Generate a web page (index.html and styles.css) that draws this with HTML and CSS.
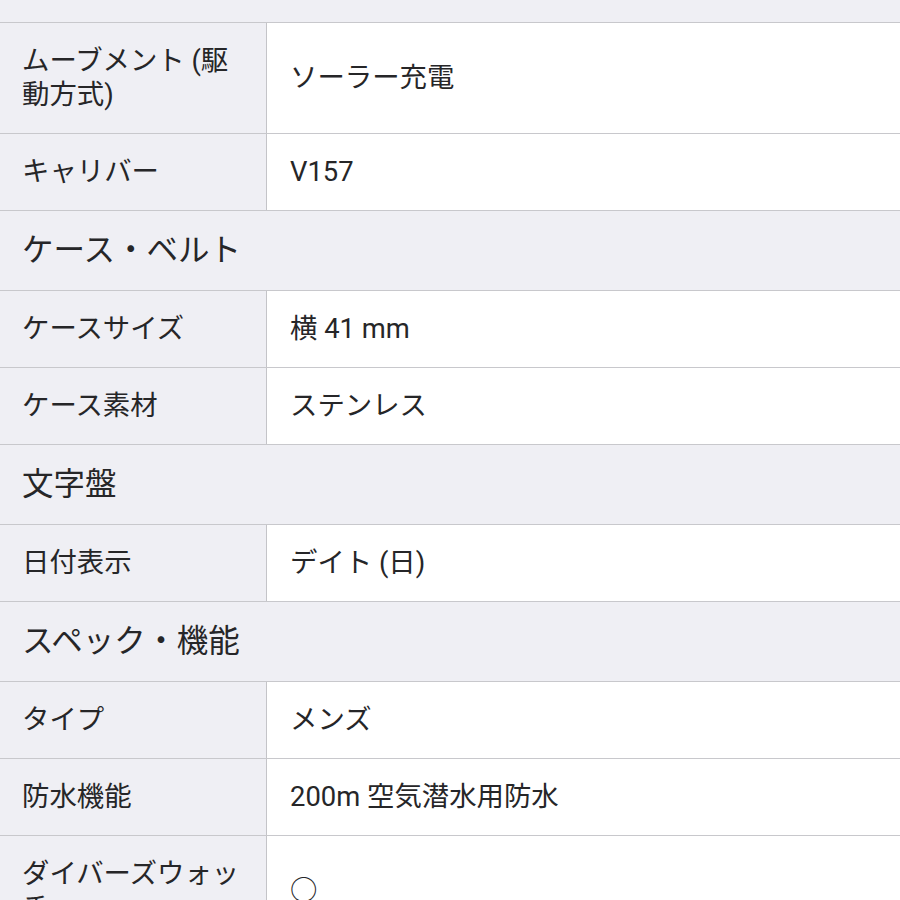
FILE: index.html
```html
<!DOCTYPE html>
<html lang="ja">
<head>
<meta charset="utf-8">
<link rel="stylesheet" href="styles.css">
</head>
<body>
<div class="spec">
  <div class="top-gap"></div>
  <div class="row"><div class="label">ムーブメント (駆動方式)</div><div class="value">ソーラー充電</div></div>
  <div class="row"><div class="label">キャリバー</div><div class="value">V157</div></div>
  <div class="section">ケース・ベルト</div>
  <div class="row"><div class="label">ケースサイズ</div><div class="value">横 41 mm</div></div>
  <div class="row"><div class="label">ケース素材</div><div class="value">ステンレス</div></div>
  <div class="section">文字盤</div>
  <div class="row"><div class="label">日付表示</div><div class="value">デイト (日)</div></div>
  <div class="section">スペック・機能</div>
  <div class="row"><div class="label">タイプ</div><div class="value">メンズ</div></div>
  <div class="row"><div class="label">防水機能</div><div class="value">200m 空気潜水用防水</div></div>
  <div class="row"><div class="label">ダイバーズウォッチ</div><div class="value">○</div></div>
</div>
</body>
</html>
```

FILE: styles.css
```css
html, body {
  margin: 0;
  padding: 0;
  background: #efeff4;
}
body {
  font-family: "Roboto", "Noto Sans CJK JP", sans-serif;
  color: #262628;
  height: 900px;
  overflow: hidden;
}
.spec {
  display: flex;
  flex-direction: column;
}
.top-gap {
  height: 22px;
}
.row {
  display: grid;
  grid-template-columns: 267px 1fr;
  border-top: 1px solid #c8c8cc;
  font-size: 27.4px;
  line-height: 34px;
}
.label {
  background: #efeff4;
  border-right: 1px solid #c4c4c8;
  padding: 21px 22px 21px 22px;
}
.value {
  background: #ffffff;
  padding: 21px 22px 21px 23px;
  display: flex;
  align-items: center;
}
.section {
  border-top: 1px solid #c8c8cc;
  background: #efeff4;
  font-size: 31.5px;
  line-height: 39px;
  padding: 20px 22px;
}
```
